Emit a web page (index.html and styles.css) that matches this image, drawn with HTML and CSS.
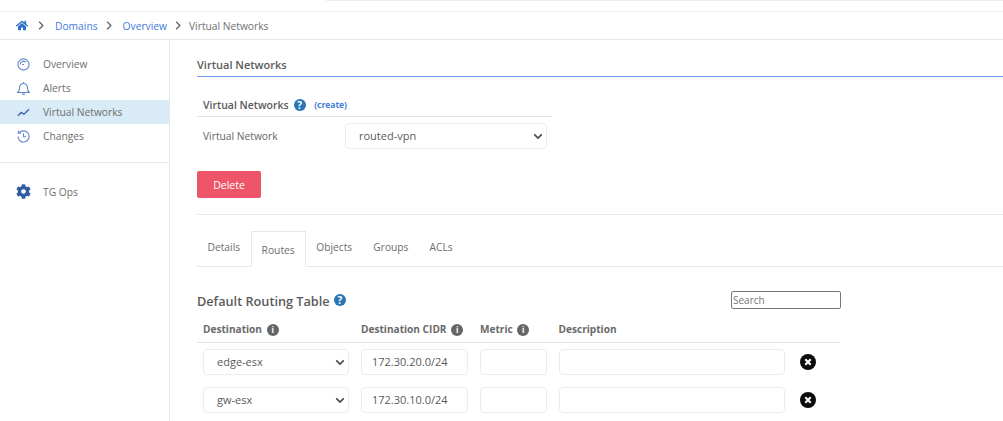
FILE: index.html
```html
<!DOCTYPE html>
<html lang="en">
<head>
    <meta charset="UTF-8">
    <meta name="viewport" content="width=device-width, initial-scale=1.0">
    <title>Virtual Networks</title>
    <link rel="stylesheet" href="styles.css">
</head>
<body>
    <div class="topstrip"></div>
    <nav class="crumbs">
        <svg class="home" viewBox="0 0 576 512"><path fill="#2f6fc9" d="M280 148 96 300v164a16 16 0 0 0 16 16l112-.3a16 16 0 0 0 16-16V368a16 16 0 0 1 16-16h64a16 16 0 0 1 16 16v95.6a16 16 0 0 0 16 16.1l112 .3a16 16 0 0 0 16-16V300L296 148a12 12 0 0 0-16 0zM572 251l-84-69V44a12 12 0 0 0-12-12h-56a12 12 0 0 0-12 12v72l-89-74a48 48 0 0 0-61 0L4 251a12 12 0 0 0-2 17l26 31a12 12 0 0 0 17 2L280 107a12 12 0 0 1 16 0l235 194a12 12 0 0 0 17-2l26-31a12 12 0 0 0-2-17z"/></svg>
        <svg class="sep" viewBox="0 0 8 12"><path d="M1.5 1l5 5-5 5"/></svg>
        <a class="crumb-link">Domains</a>
        <svg class="sep" viewBox="0 0 8 12"><path d="M1.5 1l5 5-5 5"/></svg>
        <a class="crumb-link">Overview</a>
        <svg class="sep sep-last" viewBox="0 0 8 12"><path d="M1.5 1l5 5-5 5"/></svg>
        <span>Virtual Networks</span>
    </nav>

    <div class="layout">
        <aside class="sidebar">
            <ul class="menu">
                <li class="menu-item">
                    <svg class="menu-icon" viewBox="0 0 14 14"><circle cx="7" cy="7" r="6"/><path d="M3.500 7A3.500 3.500 0 0 1 9.500 4.500M7.500 7H5.500"/></svg>
                    Overview
                </li>
                <li class="menu-item">
                    <svg class="menu-icon" viewBox="0 0 14 14"><path d="M.8 11.300h12.400c-1.500-1.500-2-3-2-5.500a4.200 4.200 0 0 0-8.400 0c0 2.500-.5 4-2 5.500zM5.500 13h3M7 .4v1.200"/></svg>
                    Alerts
                </li>
                <li class="menu-item active">
                    <svg class="menu-icon chart" viewBox="0 0 14 14"><path d="M1 10.500l3.500-3.500 3 1.800 5.500-5.300"/></svg>
                    Virtual Networks
                </li>
                <li class="menu-item">
                    <svg class="menu-icon" viewBox="0 0 14 14"><path d="M2.300 3.200A6 6 0 1 1 1 7M1.500 .8v2.700h2.700M7 3.500V7.300h3"/></svg>
                    Changes
                </li>
            </ul>
            <div class="ops">
                <svg class="gear" viewBox="0 0 512 512"><path fill="#2f5da0" d="M487 316l-42-25a192 192 0 0 0 0-70l42-25a12 12 0 0 0 6-14 248 248 0 0 0-55-95 12 12 0 0 0-15-2l-42 25a188 188 0 0 0-61-35V26a12 12 0 0 0-9-12 250 250 0 0 0-110 0 12 12 0 0 0-10 12v49a194 194 0 0 0-61 35L89 86a12 12 0 0 0-15 2 247 247 0 0 0-55 95 12 12 0 0 0 6 14l42 25a192 192 0 0 0 0 70l-42 25a12 12 0 0 0-6 14 248 248 0 0 0 55 95 12 12 0 0 0 15 2l42-25a188 188 0 0 0 61 35v49a12 12 0 0 0 10 12 250 250 0 0 0 110 0 12 12 0 0 0 9-12v-49a194 194 0 0 0 61-35l42 25a12 12 0 0 0 15-2 247 247 0 0 0 55-95 12 12 0 0 0-7-14zM256 336a80 80 0 1 1 0-160 80 80 0 0 1 0 160z"/></svg>
                TG Ops
            </div>
        </aside>

        <main class="content">
            <h2 class="page-title">Virtual Networks</h2>

            <div class="vn-box">
                <div class="vn-head">
                    <b>Virtual Networks</b>
                    <span class="help help-sm">?</span>
                    <a class="create">(create)</a>
                </div>
                <div class="vn-row">
                    <label class="vn-label">Virtual Network</label>
                    <div class="select vn-select">routed-vpn
                        <svg class="chev" viewBox="0 0 12 8"><path d="M1.500 1.500L6 6l4.500-4.500"/></svg>
                    </div>
                </div>
            </div>

            <button class="delete">Delete</button>
            <hr class="rule">

            <div class="tabs">
                <span class="tab">Details</span>
                <span class="tab current">Routes</span>
                <span class="tab">Objects</span>
                <span class="tab">Groups</span>
                <span class="tab">ACLs</span>
            </div>

            <div class="routes">
                <div class="routes-top">
                    <h3>Default Routing Table <span class="help">?</span></h3>
                    <input class="search" placeholder="Search">
                </div>
                <div class="grid grid-head">
                    <div>Destination <span class="info">i</span></div>
                    <div>Destination CIDR <span class="info">i</span></div>
                    <div>Metric <span class="info">i</span></div>
                    <div>Description</div>
                </div>
                <div class="grid grid-row">
                    <div class="select">edge-esx
                        <svg class="chev" viewBox="0 0 12 8"><path d="M1.500 1.500L6 6l4.500-4.500"/></svg>
                    </div>
                    <div class="field">172.30.20.0/24</div>
                    <div class="field"></div>
                    <div class="field"></div>
                    <svg class="remove" viewBox="0 0 16 16"><circle cx="8" cy="8" r="8"/><path d="M5.300 5.300l5.400 5.400M10.700 5.300l-5.400 5.400"/></svg>
                </div>
                <div class="grid grid-row">
                    <div class="select">gw-esx
                        <svg class="chev" viewBox="0 0 12 8"><path d="M1.500 1.500L6 6l4.500-4.500"/></svg>
                    </div>
                    <div class="field">172.30.10.0/24</div>
                    <div class="field"></div>
                    <div class="field"></div>
                    <svg class="remove" viewBox="0 0 16 16"><circle cx="8" cy="8" r="8"/><path d="M5.300 5.300l5.400 5.400M10.700 5.300l-5.400 5.400"/></svg>
                </div>
            </div>
        </main>
    </div>
</body>
</html>
```

FILE: styles.css
```css
html, body {
    height: 100%;
}
body {
    margin: 0;
    overflow: hidden;
    font-family: "Open Sans", "Liberation Sans", sans-serif;
    font-size: 10.25px;
    color: #666;
    background: #fff;
}
.topstrip {
    height: 1px;
    margin-left: 326px;
    margin-bottom: 10px;
    background: #eee;
}
.crumbs {
    display: flex;
    align-items: center;
    height: 27px;
    padding-left: 16px;
    border-top: 1px solid #f0f0f0;
    border-bottom: 1px solid #e8e8e8;
    color: #707070;
}
.home {
    width: 12px;
    height: 11px;
    margin-right: 10px;
}
.sep {
    width: 6px;
    height: 9px;
    margin-right: 11px;
    fill: none;
    stroke: #666;
    stroke-width: 1.800;
}
.sep-last {
    margin-right: 8px;
}
.crumb-link {
    color: #3f7cdc;
    margin-right: 8px;
}
.layout {
    display: flex;
    height: 381px;
}
.sidebar {
    width: 169px;
    flex: none;
    border-right: 1px solid #e8e8e8;
}
.menu {
    list-style: none;
    margin: 0;
    padding: 12px 0 14px;
    border-bottom: 1px solid #e8e8e8;
}
.menu-item {
    display: flex;
    align-items: center;
    height: 24px;
    padding-left: 17px;
    color: #6e6e6e;
}
.menu-item.active {
    background: #d9ebf6;
}
.menu-icon {
    width: 13px;
    height: 13px;
    margin-right: 13px;
    fill: none;
    stroke: #5f86c6;
    stroke-width: 1.200;
}
.chart {
    stroke: #3e68ac;
    stroke-width: 1.600;
}
.ops {
    display: flex;
    align-items: center;
    margin-top: 19px;
    padding-left: 16px;
    height: 19px;
    color: #6e6e6e;
}
.gear {
    width: 15px;
    height: 15px;
    margin-right: 12px;
}
.content {
    flex: 1;
    min-width: 0;
    padding-left: 27px;
}
.page-title {
    margin: 17px 0 0;
    padding-bottom: 3px;
    height: 16px;
    font-size: 11px;
    line-height: 16px;
    font-weight: 600;
    color: #5a5a5a;
    border-bottom: 1px solid #6d9be8;
    box-sizing: content-box;
}
.vn-box {
    width: 355px;
    margin-top: 17px;
}
.vn-head {
    display: flex;
    align-items: center;
    height: 21px;
    padding-left: 6px;
    padding-bottom: 1px;
    border-bottom: 1px solid #e2e2e2;
}
.vn-head b {
    font-weight: 600;
    font-size: 10.500px;
    color: #5a5a5a;
}
.help {
    display: inline-flex;
    align-items: center;
    justify-content: center;
    width: 12px;
    height: 12px;
    margin-left: 1px;
    border-radius: 50%;
    background: #2a75b5;
    color: #fff;
    font-size: 10px;
    font-weight: 700;
    vertical-align: 2px;
}
.help-sm {
    margin-left: 5px;
}
.create {
    margin-left: 8.500px;
    font-size: 8.500px;
    font-weight: 700;
    color: #3f7cdc;
}
.vn-row {
    display: flex;
    align-items: center;
    margin-top: 6px;
    padding-left: 6px;
}
.vn-label {
    width: 142px;
}
.select, .field {
    box-sizing: border-box;
    height: 26px;
    border: 1px solid #ececec;
    border-radius: 4px;
    background: #fff;
    font-size: 11px;
    line-height: 24px;
    color: #5a5a5a;
}
.select {
    display: flex;
    justify-content: space-between;
    align-items: center;
    padding: 0 3px 0 13px;
}
.field {
    padding-left: 10px;
}
.vn-select {
    width: 202px;
}
.chev {
    width: 10px;
    height: 7px;
    fill: none;
    stroke: #4a4a4a;
    stroke-width: 2;
}
.delete {
    display: block;
    width: 64px;
    height: 27px;
    margin-top: 22px;
    padding: 0;
    border: 0;
    border-radius: 2px;
    background: #ef5568;
    color: #fff;
    font-family: inherit;
    font-size: 10.500px;
}
.rule {
    margin: 16px 0 0;
    border: 0;
    border-top: 1px solid #e8e8e8;
}
.tabs {
    display: flex;
    height: 35px;
    margin-top: 16px;
    border-bottom: 1px solid #e8e8e8;
}
.tab {
    padding: 0 10.500px;
    line-height: 33px;
    color: #6e6e6e;
    margin-bottom: -1px;
}
.tab.current {
    padding: 0 10px;
    line-height: 36px;
    border: 1px solid #e8e8e8;
    border-bottom: 1px solid #fff;
    background: #fff;
}
.routes {
    width: 643px;
}
.routes-top {
    display: flex;
    justify-content: space-between;
    align-items: center;
    margin-top: 24px;
    height: 18px;
}
.routes-top h3 {
    margin: 0;
    font-size: 12.700px;
    font-weight: 600;
    color: #5a5a5a;
    padding-top: 2px;
}
.search {
    box-sizing: border-box;
    width: 110px;
    height: 18px;
    margin-right: -1px;
    padding: 0 1px;
    border: 1px solid #777;
    border-radius: 2px;
    font-family: inherit;
    font-size: 10px;
}
.search::placeholder {
    color: #777;
}
.grid {
    display: grid;
    grid-template-columns: 146px 107px 66.500px 226px 16px;
    column-gap: 12px;
    padding-left: 6px;
    align-items: center;
}
.grid-head {
    height: 30px;
    margin-top: 4px;
    padding-top: 3px;
    box-sizing: border-box;
    font-size: 10.100px;
    font-weight: 700;
    color: #6a6a6a;
    border-bottom: 1px solid #e2e2e2;
}
.grid-row {
    margin-top: 12px;
}
.grid-head + .grid-row {
    margin-top: 6px;
}
.info {
    display: inline-flex;
    align-items: center;
    justify-content: center;
    width: 12px;
    height: 12px;
    margin-left: 2px;
    border-radius: 50%;
    background: #666;
    color: #fff;
    font-size: 8px;
    font-weight: 700;
}
.remove {
    width: 16px;
    height: 16px;
    margin-left: 3.500px;
    fill: #0c0c0c;
    stroke: none;
}
.remove path {
    fill: none;
    stroke: #fff;
    stroke-width: 2.200;
}
```
